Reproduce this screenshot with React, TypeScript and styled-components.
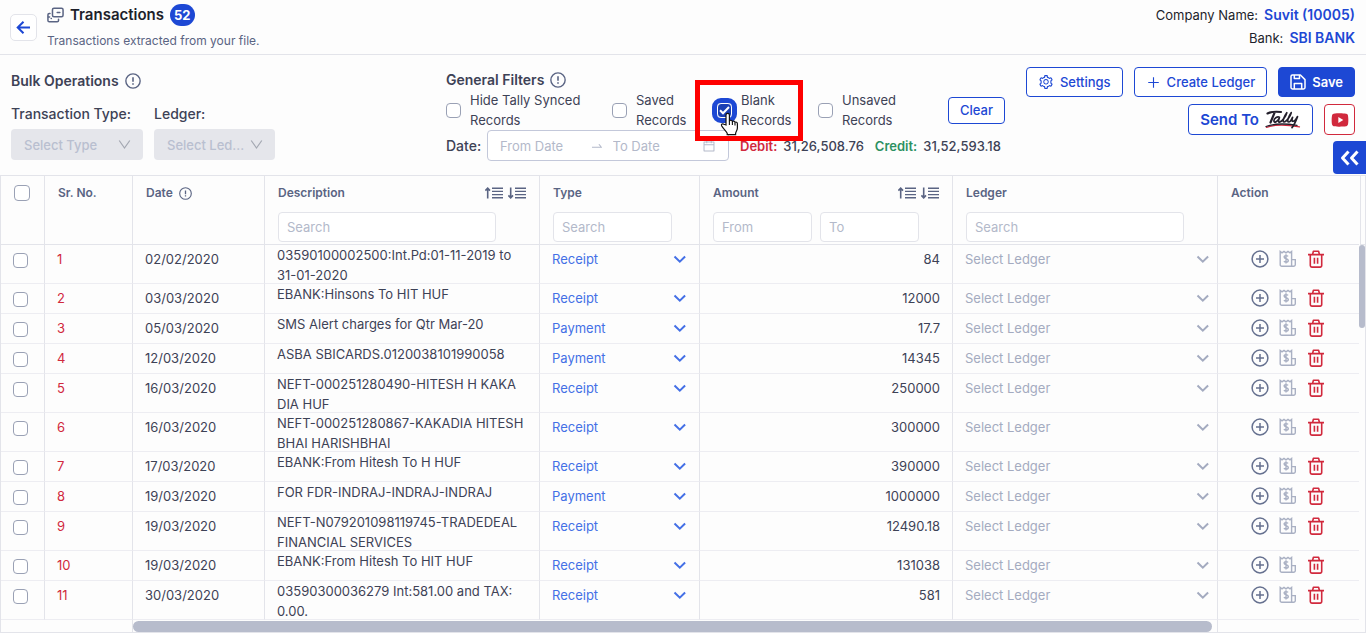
import React from "react";
import styled, { createGlobalStyle, css } from "styled-components";
import { RiYoutubeFill } from "react-icons/ri";
import { AiOutlineCalendar, AiOutlineSwapRight, AiOutlinePlus, AiOutlineSetting } from "react-icons/ai";

const blue = "#1d48d4";
const line = "#e3e4ea";
const ink = "#3d4256";
const slate = "#5a6483";
const faint = "#b3b9ca";
const red = "#d1293d";

const GlobalStyle = createGlobalStyle`
  * { box-sizing: border-box; }
  body {
    margin: 0;
    background: #fdfdfd;
    color: ${ink};
    font: 400 13px/20px Inter, "Liberation Sans", sans-serif;
  }
  button, input, select { font: inherit; color: inherit; margin: 0; }
  button { cursor: pointer; }
  svg { display: block; flex: none; }
`;

const PageHeader = styled.header`
  display: flex;
  align-items: flex-start;
  gap: 10px;
  padding: 4px 11px 3px 10px;
  border-bottom: 1px solid ${line};
`;

const BackButton = styled.button`
  display: grid;
  place-items: center;
  width: 27px;
  height: 27px;
  margin-top: 10px;
  padding: 0;
  color: ${blue};
  background: #fff;
  border: 1px solid ${line};
  border-radius: 5px;
`;

const HeaderText = styled.div`
  flex: 1;
`;

const TitleRow = styled.div`
  display: flex;
  align-items: center;
  gap: 6px;
  height: 22px;
  color: ${slate};
`;

const Title = styled.h1`
  margin: 0;
  font-size: 15px;
  font-weight: 600;
  color: #1d1f2b;
`;

const CountBadge = styled.span`
  padding: 0 4px;
  line-height: 22px;
  border-radius: 12px;
  background: ${blue};
  color: #fff;
  font-size: 13px;
  font-weight: 700;
`;

const Subtitle = styled.p`
  margin: 5px 0 0;
  color: ${slate};
  font-size: 12px;
`;

const Company = styled.dl`
  display: grid;
  gap: 3px;
  margin: 1px 0 0;
  color: #1d1f2b;
  justify-items: end;
`;

const CompanyLine = styled.div`
  display: flex;
  gap: 6px;
  dt { margin: 0; }
  dd { margin: 0; color: ${blue}; font-size: 14px; font-weight: 600; }
`;

const Toolbar = styled.section`
  position: relative;
  display: flex;
  align-items: flex-start;
  min-height: 120px;
  padding: 12px 11px 0;
`;

const Bulk = styled.div`
  flex: 1;
  padding-top: 4px;
`;

const SectionTitle = styled.h2`
  display: flex;
  align-items: center;
  gap: 6px;
  margin: 0;
  font-size: 14px;
  font-weight: 600;
  line-height: 20px;
  svg { color: ${slate}; }
`;

const BulkFields = styled.div`
  display: flex;
  gap: 11px;
  margin-top: 13px;
`;

const BulkField = styled.label<{ $width: number }>`
  display: grid;
  gap: 5px;
  width: ${(p) => p.$width}px;
  font-size: 14px;
  font-weight: 500;
`;

const SelectFrame = styled.span`
  display: grid;
  align-items: center;
  > * { grid-area: 1 / 1; }
  > svg { justify-self: end; pointer-events: none; }
`;

const BulkSelect = styled.select`
  width: 100%;
  height: 31px;
  padding: 0 13px;
  appearance: none;
  border: 0;
  border-radius: 4px;
  background: #e5e6eb;
  color: #b9bfd0;
  font-size: 13px;
  opacity: 1;
  & + svg { margin-right: 12px; color: #a4a8b2; }
`;

const Filters = styled.div`
  flex: none;
  width: 560px;
  padding-top: 3px;
`;

const CheckRow = styled.div`
  display: flex;
  align-items: center;
`;

const CheckLabel = styled.label<{ $width: number }>`
  position: relative;
  display: flex;
  align-items: center;
  gap: 9px;
  width: ${(p) => p.$width}px;
`;

const Check = styled.input<{ $focused?: boolean }>`
  flex: none;
  display: grid;
  place-items: center;
  width: 15px;
  height: 15px;
  margin: 0;
  appearance: none;
  border: 1px solid #9aa1b5;
  border-radius: 4px;
  background: #fff;
  ${(p) =>
    p.$focused &&
    css`
      border-color: #fff;
      background: #1a3fb4;
      outline: 5px solid ${blue};
    `}
`;

const HeadCheck = styled(Check)`
  width: 16px;
  height: 16px;
`;

const CheckMark = styled.svg`
  position: absolute;
  left: 2px;
  color: #fff;
  pointer-events: none;
`;

const Highlight = styled.span`
  position: absolute;
  z-index: 2;
  inset: -10px auto auto -22px;
  width: 108px;
  height: 61px;
  border: 5px solid #fe0000;
  pointer-events: none;
`;

const Pointer = styled.svg`
  position: absolute;
  z-index: 3;
  left: 3px;
  top: 22px;
  pointer-events: none;
`;

const ClearButton = styled.button`
  width: 57px;
  height: 27px;
  padding: 0;
  border: 1px solid ${blue};
  border-radius: 4px;
  background: #fff;
  color: ${blue};
  font-weight: 500;
`;

const DateRow = styled.div`
  display: flex;
  align-items: center;
`;

const DateTitle = styled.span`
  width: 41px;
  font-size: 14px;
  font-weight: 500;
`;

const DateRange = styled.div`
  display: flex;
  align-items: center;
  width: 242px;
  height: 31px;
  padding: 0 12px;
  border: 1px solid #c3c8da;
  border-radius: 4px;
  background: #fff;
  color: ${faint};
`;

const DateInput = styled.input`
  flex: 1;
  min-width: 0;
  padding: 0;
  border: 0;
  outline: 0;
  background: none;
  &::placeholder { color: ${faint}; opacity: 1; }
  & + svg + & { margin-left: 9px; }
`;

const Total = styled.span<{ $color: string }>`
  margin-left: 11px;
  font-weight: 500;
  b { margin-right: 6px; font-weight: 600; color: ${(p) => p.$color}; }
`;

const Actions = styled.div`
  flex: none;
  width: 349px;
  display: grid;
  gap: 7px;
`;

const ActionRow = styled.div`
  display: flex;
  justify-content: flex-end;
  gap: 11px;
`;

const ActionButton = styled.button<{ $solid?: boolean; $tall?: boolean }>`
  display: flex;
  align-items: center;
  gap: 6px;
  height: ${(p) => (p.$tall ? 31 : 30)}px;
  padding: 0 11px;
  border: 1px solid ${blue};
  border-radius: 4px;
  background: ${(p) => (p.$solid ? blue : "#fff")};
  color: ${(p) => (p.$solid ? "#fff" : blue)};
  font-size: ${(p) => (p.$tall ? 15 : 13)}px;
  font-weight: ${(p) => (p.$solid || p.$tall ? 600 : 500)};
  white-space: nowrap;
`;

const VideoButton = styled.button`
  display: grid;
  place-items: center;
  width: 31px;
  height: 31px;
  padding: 0;
  border: 1px solid ${red};
  border-radius: 4px;
  background: #fff;
  color: ${red};
`;

const DrawerTab = styled.button`
  position: absolute;
  right: 0;
  bottom: 1px;
  display: grid;
  place-items: center;
  width: 33px;
  height: 33px;
  padding: 0;
  border: 0;
  border-radius: 4px 0 0 4px;
  background: ${blue};
  color: #fff;
`;

const Grid = styled.section`
  border: 1px solid ${line};
`;

const GridBody = styled.div`
  display: flex;
`;

const Table = styled.table`
  flex: 1;
  min-width: 0;
  table-layout: fixed;
  border-collapse: separate;
  border-spacing: 0;
`;

const HeadCell = styled.th`
  height: 69px;
  padding: 7px 13px 2px;
  vertical-align: top;
  text-align: left;
  font-size: 12px;
  font-weight: 600;
  color: ${slate};
  border-right: 1px solid ${line};
  border-bottom: 1px solid ${line};
  &:last-child { border-right: 0; }
`;

const HeadTitle = styled.div`
  display: flex;
  align-items: center;
  gap: 6px;
  height: 20px;
`;

const SortButtons = styled.span`
  display: flex;
  gap: 5px;
  margin-left: auto;
`;

const SortButton = styled.button`
  padding: 0;
  border: 0;
  background: none;
`;

const SearchRow = styled.div`
  display: flex;
  gap: 8px;
  margin-top: 9px;
`;

const SearchInput = styled.input<{ $width: number }>`
  width: ${(p) => p.$width}px;
  height: 30px;
  padding: 0 8px;
  border: 1px solid ${line};
  border-radius: 4px;
  background: #fff;
  font-size: 13px;
  font-weight: 400;
  &::placeholder { color: ${faint}; opacity: 1; }
`;

const Cell = styled.td<{ $align?: "right"; $tone?: string }>`
  height: 30px;
  padding: 4px 12px 5px;
  vertical-align: top;
  text-align: ${(p) => p.$align ?? "left"};
  color: ${(p) => p.$tone ?? ink};
  border-right: 1px solid ${line};
  border-bottom: 1px solid #ededf2;
  &:last-child { border-right: 0; }
`;

const DescriptionCell = styled(Cell)`
  padding: 0 12px;
`;

const LedgerCell = styled(Cell)`
  padding-right: 7px;
`;

const Description = styled.div`
  margin-bottom: -2px;
  white-space: pre-line;
`;

const CellSelect = styled.select<{ $tone: string }>`
  width: 100%;
  height: 20px;
  padding: 0;
  appearance: none;
  border: 0;
  background: none;
  color: ${(p) => p.$tone};
  & + svg { color: ${(p) => p.$tone}; }
`;

const RowCheck = styled(Check)`
  margin-top: 4px;
`;

const RowActions = styled.div`
  display: flex;
  align-items: center;
  gap: 10px;
  height: 20px;
  padding-left: 21px;
`;

const IconButton = styled.button<{ $tone: string }>`
  padding: 0;
  border: 0;
  background: none;
  color: ${(p) => p.$tone};
`;

const Gutter = styled.div`
  width: 6px;
`;

const GutterHead = styled.div`
  height: 69px;
  margin-left: 1px;
  border-left: 1px solid ${line};
  border-bottom: 1px solid ${line};
`;

const VerticalThumb = styled.div`
  height: 83px;
  border-radius: 3px;
  background: #b7bccc;
`;

const HorizontalTrack = styled.div`
  display: flex;
  height: 12px;
`;

const TrackStart = styled.div`
  width: 132px;
  border-right: 1px solid ${line};
`;

const HorizontalThumb = styled.div`
  flex: 1;
  margin-top: 1px;
  border-radius: 6px;
  background: #b7bccc;
`;

const TrackEnd = styled.div`
  width: 148px;
  margin-left: 5px;
  border-left: 1px solid ${line};
`;

const InfoIcon = ({ size = 16 }: { size?: number }) => (
  <svg width={size} height={size} viewBox="0 0 15 15" fill="none" stroke="currentColor" strokeWidth="1.3">
    <circle cx="7.5" cy="7.5" r="6.7" />
    <path d="M7.5 4v4.3M7.5 9.6v1.5" strokeWidth="1.5" />
  </svg>
);

const ArrowLeft = () => (
  <svg width="15" height="15" viewBox="0 0 15 15" fill="none" stroke="currentColor" strokeWidth="2">
    <path d="M14 7.5H2M7.5 1.7 1.7 7.5l5.8 5.8" />
  </svg>
);

const CardsIcon = () => (
  <svg width="17" height="18" viewBox="0 0 18 18" fill="none" stroke="currentColor" strokeWidth="1.6" strokeLinecap="round" strokeLinejoin="round">
    <rect x="5.8" y="1.8" width="11.2" height="9" rx="1.6" />
    <path d="M3.2 7.3H2.4A1.4 1.4 0 0 0 1 8.7v6.1a1.4 1.4 0 0 0 1.4 1.4h8.4a1.4 1.4 0 0 0 1.4-1.4v-1.3" />
    <path d="M10.8 6.3h2.8M4.4 12.7h.2M1.4 11.2h1.4" />
  </svg>
);

const ThinChevron = () => (
  <svg width="13" height="13" viewBox="0 0 13 13" fill="none" stroke="currentColor" strokeWidth="1.2">
    <path d="m1.200 2.500 5.300 7.500 5.300-7.500" />
  </svg>
);

const Chevron = () => (
  <svg width="14" height="14" viewBox="0 0 14 14" fill="none" stroke="currentColor" strokeWidth="2">
    <path d="m1.500 4.500 5.300 5.200 5.300-5.200" />
  </svg>
);

const SortIcon = ({ up }: { up?: boolean }) => (
  <svg width="18" height="12" viewBox="0 0 18 12" fill="none" stroke="currentColor" strokeWidth="1.6">
    <path d="M7 1.3h11M7 4.4h11M7 7.6h11M7 10.7h11" strokeWidth="1.4" />
    {up ? <path d="M2.7 11.5V2M.4 3.6l2.3-2.4L5 3.6" /> : <path d="M2.7.5V10M.4 8.4l2.3 2.4L5 8.4" />}
  </svg>
);

const SaveIcon = () => (
  <svg width="16" height="16" viewBox="0 0 16 16" fill="none" stroke="currentColor" strokeWidth="1.500" strokeLinejoin="round">
    <path d="M2.400 1h8L15 5.600v8A1.400 1.400 0 0 1 13.600 15H2.400A1.400 1.400 0 0 1 1 13.600V2.400A1.400 1.400 0 0 1 2.400 1z" />
    <path d="M4.300 1v3.600h5.200V1M4.300 15V9.400h7.400V15" />
  </svg>
);

const PlusCircle = () => (
  <svg width="18" height="18" viewBox="0 0 18 18" fill="none" stroke="currentColor" strokeWidth="1.5">
    <circle cx="9" cy="9" r="7.9" />
    <path d="M9 5v8M5 9h8" />
  </svg>
);

const ReceiptIcon = () => (
  <svg width="18" height="18" viewBox="0 0 18 18" fill="none" stroke="currentColor" strokeWidth="1.4">
    <path d="M12.6 16.3H2.8a1.6 1.6 0 0 1-1.6-1.6V1.5L3 2.9l2-1.5 2 1.5 2-1.5 2 1.5 1.6-1.4v14.8h2a1.7 1.7 0 0 0 1.7-1.7V9.6h-3.7" />
    <path d="M9.1 6.4c-.5-.6-1.2-.8-2-.8-1.200 0-2 .6-2 1.500 0 2.200 4.200 1 4.200 3.400 0 1-.9 1.600-2.200 1.600-.9 0-1.700-.300-2.200-.900M7 4.300v9.100" />
  </svg>
);

const TrashIcon = () => (
  <svg width="18" height="18" viewBox="0 0 18 18" fill="none" stroke="currentColor" strokeWidth="1.600" strokeLinejoin="round">
    <path d="M1 4.600h16M5.600 4.400 6.400 1.300h5.200l.8 3.100" />
    <path d="M3.300 4.800v10.800A1.500 1.500 0 0 0 4.800 17.100h8.400a1.500 1.500 0 0 0 1.500-1.500V4.800M7.400 7.800v6M10.600 7.800v6" />
  </svg>
);

const TallyLogo = () => (
  <svg width="36" height="19" viewBox="0 0 36 19" fill="none" strokeLinecap="round" strokeLinejoin="round">
    <path d="M1.500 17.500C9 14.400 22 14.600 34.500 16.800" stroke="#d1293d" strokeWidth="1.200" />
    <path d="M2.500 3.400C6 1.600 11 1.500 16 2M9.700 2.300 5.500 12.500" stroke="#231f2b" strokeWidth="2.200" />
    <path d="M14.500 7.200c-2.500-1-5.500 1.300-5.600 3.600 0 2.300 3.400 1.400 5.400-2.600-1 2.300-1.200 4 .300 3.900 2.600-.300 6.300-6 7.200-9.400-2.800 3.800-4.900 9.300-2.700 9.300 2.500 0 6.300-6 7.100-9.300-2.700 3.800-4.700 9.200-2.500 9.300 1.500 0 2.800-2.400 3.900-4.700-.8 2.400-.9 4 .3 4 1.500 0 3.500-2.600 4.600-4.700-1.400 3.800-3.500 8.600-5.500 11" stroke="#231f2b" strokeWidth="1.700" />
    <path d="M1 16.500c8-2.900 20-3 31-1.200" stroke="#231f2b" strokeWidth="1.300" />
  </svg>
);

const DoubleChevron = () => (
  <svg width="19" height="16" viewBox="0 0 19 16" fill="none" stroke="currentColor" strokeWidth="3" strokeLinejoin="round">
    <path d="M8.500 1.500 2.500 8l6 6.500M17.500 1.500 11.500 8l6 6.500" />
  </svg>
);

const rows = [
  ["02/02/2020", "03590100002500:Int.Pd:01-11-2019 to\n31-01-2020", "Receipt", "84"],
  ["03/03/2020", "EBANK:Hinsons To HIT HUF", "Receipt", "12000"],
  ["05/03/2020", "SMS Alert charges for Qtr Mar-20", "Payment", "17.7"],
  ["12/03/2020", "ASBA SBICARDS.0120038101990058", "Payment", "14345"],
  ["16/03/2020", "NEFT-000251280490-HITESH H KAKA\nDIA HUF", "Receipt", "250000"],
  ["16/03/2020", "NEFT-000251280867-KAKADIA HITESH\nBHAI HARISHBHAI", "Receipt", "300000"],
  ["17/03/2020", "EBANK:From Hitesh To H HUF", "Receipt", "390000"],
  ["19/03/2020", "FOR FDR-INDRAJ-INDRAJ-INDRAJ", "Payment", "1000000"],
  ["19/03/2020", "NEFT-N079201098119745-TRADEDEAL\nFINANCIAL SERVICES", "Receipt", "12490.18"],
  ["19/03/2020", "EBANK:From Hitesh To HIT HUF", "Receipt", "131038"],
  ["30/03/2020", "03590300036279 Int:581.00 and TAX:\n0.00.", "Receipt", "581"],
];

const columnWidths = [44, 88, 132, 275, 160, 253, 265, 141];

const Sorter = () => (
  <SortButtons>
    <SortButton aria-label="Sort ascending"><SortIcon up /></SortButton>
    <SortButton aria-label="Sort descending"><SortIcon /></SortButton>
  </SortButtons>
);

export default function App() {
  return (
    <>
      <GlobalStyle />
      <PageHeader>
        <BackButton aria-label="Back"><ArrowLeft /></BackButton>
        <HeaderText>
          <TitleRow>
            <CardsIcon />
            <Title>Transactions</Title>
            <CountBadge>52</CountBadge>
          </TitleRow>
          <Subtitle>Transactions extracted from your file.</Subtitle>
        </HeaderText>
        <Company>
          <CompanyLine><dt>Company Name:</dt><dd>Suvit (10005)</dd></CompanyLine>
          <CompanyLine><dt>Bank:</dt><dd>SBI BANK</dd></CompanyLine>
        </Company>
      </PageHeader>

      <Toolbar>
        <Bulk>
          <SectionTitle>Bulk Operations <InfoIcon /></SectionTitle>
          <BulkFields>
            <BulkField $width={132}>
              Transaction Type:
              <SelectFrame>
                <BulkSelect disabled><option>Select Type</option></BulkSelect>
                <ThinChevron />
              </SelectFrame>
            </BulkField>
            <BulkField $width={121}>
              Ledger:
              <SelectFrame>
                <BulkSelect disabled><option>Select Led...</option></BulkSelect>
                <ThinChevron />
              </SelectFrame>
            </BulkField>
          </BulkFields>
        </Bulk>

        <Filters>
          <SectionTitle>General Filters <InfoIcon /></SectionTitle>
          <CheckRow>
            <CheckLabel $width={166}><Check type="checkbox" /><span>Hide Tally Synced<br />Records</span></CheckLabel>
            <CheckLabel $width={105}><Check type="checkbox" /><span>Saved<br />Records</span></CheckLabel>
            <CheckLabel $width={101}>
              <Check type="checkbox" defaultChecked $focused />
              <CheckMark width="11" height="9" viewBox="0 0 11 9" fill="none" stroke="currentColor" strokeWidth="2">
                <path d="m1 4.200 3 3L10 1" />
              </CheckMark>
              <span>Blank<br />Records</span>
              <Highlight />
              <Pointer width="19" height="24" viewBox="0 0 19 24">
                <path
                  d="M6 13V3a1.700 1.700 0 0 1 3.400 0v6.200c.3-1.300 2.600-1.300 3 .4.6-1 2.400-.6 2.600.8.8-.7 2.400-.2 2.400 1.300V16c0 2.200-1.600 3.400-1.800 5.500v1.200H7.200v-1.500C5.800 18.500 3 16.600 1.600 13.800c-.7-1.500 1-2.600 2.300-1.500z"
                  fill="#fff" stroke="#111" strokeWidth="1.200"
                />
                <path d="M9.400 9v4M12.400 10v3M15 11v2.500" stroke="#111" strokeWidth="1.100" />
              </Pointer>
            </CheckLabel>
            <CheckLabel $width={130}><Check type="checkbox" /><span>Unsaved<br />Records</span></CheckLabel>
            <ClearButton>Clear</ClearButton>
          </CheckRow>
          <DateRow>
            <DateTitle>Date:</DateTitle>
            <DateRange>
              <DateInput aria-label="From Date" placeholder="From Date" />
              <AiOutlineSwapRight size={14} />
              <DateInput aria-label="To Date" placeholder="To Date" />
              <AiOutlineCalendar size={14} />
            </DateRange>
            <Total $color={red}><b>Debit:</b>31,26,508.76</Total>
            <Total $color="#2c9162"><b>Credit:</b>31,52,593.18</Total>
          </DateRow>
        </Filters>

        <Actions>
          <ActionRow>
            <ActionButton><AiOutlineSetting size={16} />Settings</ActionButton>
            <ActionButton><AiOutlinePlus size={15} />Create Ledger</ActionButton>
            <ActionButton $solid><SaveIcon />Save</ActionButton>
          </ActionRow>
          <ActionRow>
            <ActionButton $tall>Send To <TallyLogo /></ActionButton>
            <VideoButton aria-label="Watch the video"><RiYoutubeFill size={20} /></VideoButton>
          </ActionRow>
        </Actions>
        <DrawerTab aria-label="Open panel"><DoubleChevron /></DrawerTab>
      </Toolbar>

      <Grid>
        <GridBody>
          <Table>
            <colgroup>
              {columnWidths.map((w, i) => <col key={i} width={w} />)}
            </colgroup>
            <thead>
              <tr>
                <HeadCell><HeadTitle><HeadCheck type="checkbox" aria-label="Select all rows" /></HeadTitle></HeadCell>
                <HeadCell><HeadTitle>Sr. No.</HeadTitle></HeadCell>
                <HeadCell><HeadTitle>Date <InfoIcon size={13} /></HeadTitle></HeadCell>
                <HeadCell>
                  <HeadTitle>Description <Sorter /></HeadTitle>
                  <SearchRow><SearchInput $width={218} aria-label="Search description" placeholder="Search" /></SearchRow>
                </HeadCell>
                <HeadCell>
                  <HeadTitle>Type</HeadTitle>
                  <SearchRow><SearchInput $width={119} aria-label="Search type" placeholder="Search" /></SearchRow>
                </HeadCell>
                <HeadCell>
                  <HeadTitle>Amount <Sorter /></HeadTitle>
                  <SearchRow>
                    <SearchInput $width={99} aria-label="Amount from" placeholder="From" />
                    <SearchInput $width={99} aria-label="Amount to" placeholder="To" />
                  </SearchRow>
                </HeadCell>
                <HeadCell>
                  <HeadTitle>Ledger</HeadTitle>
                  <SearchRow><SearchInput $width={218} aria-label="Search ledger" placeholder="Search" /></SearchRow>
                </HeadCell>
                <HeadCell><HeadTitle>Action</HeadTitle></HeadCell>
              </tr>
            </thead>
            <tbody>
              {rows.map(([date, text, type, amount], i) => (
                <tr key={i}>
                  <Cell><RowCheck type="checkbox" aria-label={`Select row ${i + 1}`} /></Cell>
                  <Cell $tone={red}>{i + 1}</Cell>
                  <Cell>{date}</Cell>
                  <DescriptionCell><Description>{text}</Description></DescriptionCell>
                  <Cell>
                    <SelectFrame>
                      <CellSelect $tone="#4470e6" aria-label="Type" defaultValue={type}>
                        <option>Receipt</option>
                        <option>Payment</option>
                      </CellSelect>
                      <Chevron />
                    </SelectFrame>
                  </Cell>
                  <Cell $align="right">{amount}</Cell>
                  <LedgerCell>
                    <SelectFrame>
                      <CellSelect $tone="#a4abc0" aria-label="Ledger"><option>Select Ledger</option></CellSelect>
                      <Chevron />
                    </SelectFrame>
                  </LedgerCell>
                  <Cell>
                    <RowActions>
                      <IconButton $tone="#65708f" aria-label="Add"><PlusCircle /></IconButton>
                      <IconButton $tone="#a9b0c3" aria-label="Invoice"><ReceiptIcon /></IconButton>
                      <IconButton $tone={red} aria-label="Delete"><TrashIcon /></IconButton>
                    </RowActions>
                  </Cell>
                </tr>
              ))}
            </tbody>
          </Table>
          <Gutter>
            <GutterHead />
            <VerticalThumb />
          </Gutter>
        </GridBody>
        <HorizontalTrack>
          <TrackStart />
          <HorizontalThumb />
          <TrackEnd />
        </HorizontalTrack>
      </Grid>
    </>
  );
}
